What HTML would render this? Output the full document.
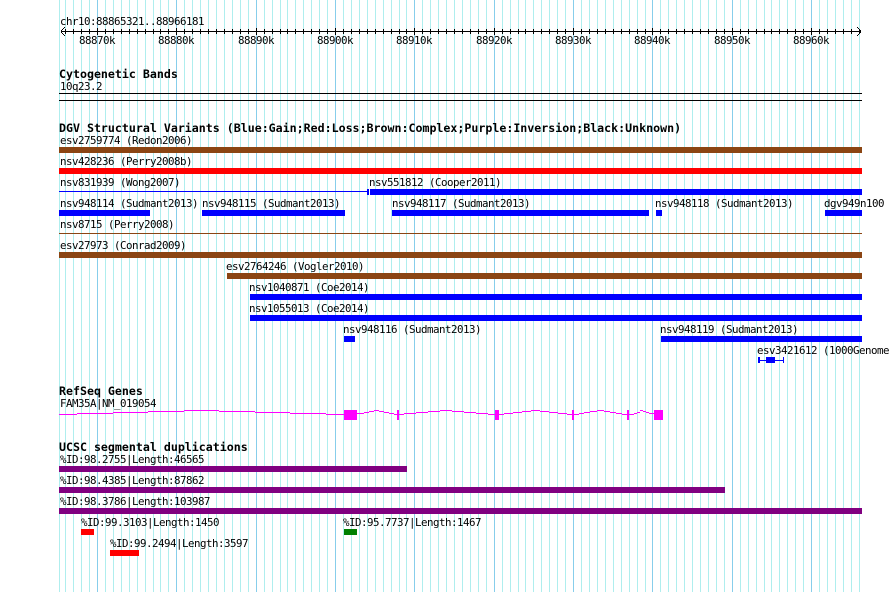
<!DOCTYPE html>
<html>
<head>
<meta charset="utf-8">
<style>
html,body{margin:0;padding:0;background:#fff;width:890px;height:592px;overflow:hidden}
svg{display:block}
text{font-family:"DejaVu Sans Mono","Liberation Mono",monospace;font-size:10.8px;letter-spacing:-0.503px;fill:#000}
text.b{font-size:11.62px;font-weight:bold;letter-spacing:0}
</style>
</head>
<body>
<svg width="890" height="592" viewBox="0 0 890 592" xmlns="http://www.w3.org/2000/svg">
<defs>
<path id="mi" d="M59.5 0V592M65.5 0V592M73.5 0V592M81.5 0V592M89.5 0V592M105.5 0V592M113.5 0V592M121.5 0V592M129.5 0V592M137.5 0V592M145.5 0V592M153.5 0V592M160.5 0V592M168.5 0V592M184.5 0V592M192.5 0V592M200.5 0V592M208.5 0V592M216.5 0V592M224.5 0V592M232.5 0V592M240.5 0V592M248.5 0V592M264.5 0V592M272.5 0V592M280.5 0V592M287.5 0V592M295.5 0V592M303.5 0V592M311.5 0V592M319.5 0V592M327.5 0V592M343.5 0V592M351.5 0V592M359.5 0V592M367.5 0V592M375.5 0V592M383.5 0V592M391.5 0V592M399.5 0V592M406.5 0V592M422.5 0V592M430.5 0V592M438.5 0V592M446.5 0V592M454.5 0V592M462.5 0V592M470.5 0V592M478.5 0V592M486.5 0V592M502.5 0V592M510.5 0V592M518.5 0V592M525.5 0V592M533.5 0V592M541.5 0V592M549.5 0V592M557.5 0V592M565.5 0V592M581.5 0V592M589.5 0V592M597.5 0V592M605.5 0V592M613.5 0V592M621.5 0V592M629.5 0V592M637.5 0V592M645.5 0V592M660.5 0V592M668.5 0V592M676.5 0V592M684.5 0V592M692.5 0V592M700.5 0V592M708.5 0V592M716.5 0V592M724.5 0V592M740.5 0V592M748.5 0V592M756.5 0V592M764.5 0V592M771.5 0V592M779.5 0V592M787.5 0V592M795.5 0V592M803.5 0V592M819.5 0V592M827.5 0V592M835.5 0V592M843.5 0V592M851.5 0V592M859.5 0V592"/>
<path id="ma" d="M97.5 0V592M176.5 0V592M256.5 0V592M335.5 0V592M414.5 0V592M494.5 0V592M573.5 0V592M652.5 0V592M732.5 0V592M811.5 0V592"/>
<clipPath id="c1"><rect x="61" y="29" width="800" height="5"/></clipPath>
<clipPath id="c2"><rect x="61" y="28" width="800" height="7"/></clipPath>
</defs>

<g shape-rendering="crispEdges" fill="none">
<use href="#mi" stroke="#afeeee"/>
<use href="#ma" stroke="#87ceeb"/>

<!-- ruler -->
<path d="M61 31.5H861" stroke="#000"/>
<g clip-path="url(#c1)"><use href="#mi" stroke="#000"/></g>
<g clip-path="url(#c2)"><use href="#ma" stroke="#000"/></g>
<path d="M61 30h1v3h-1zM62 29h1v1h-1zM62 33h1v1h-1zM63 28h1v1h-1zM63 34h1v1h-1zM64 27h1v1h-1zM64 35h1v1h-1z" fill="#000"/>
<path d="M860 30h1v3h-1zM859 29h1v1h-1zM859 33h1v1h-1zM858 28h1v1h-1zM858 34h1v1h-1zM857 27h1v1h-1zM857 35h1v1h-1z" fill="#000"/>

<!-- band lines -->
<path d="M59 93.5H862M59 100.5H862" stroke="#000"/>
</g>

<g shape-rendering="crispEdges">
<!-- DGV -->
<rect x="59" y="147" width="803" height="6" fill="#8b4513"/>
<rect x="59" y="168" width="803" height="6" fill="#f00"/>
<rect x="59" y="191" width="309" height="1" fill="#00f"/>
<rect x="367" y="189" width="2" height="6" fill="#00f"/>
<rect x="370" y="189" width="492" height="6" fill="#00f"/>
<rect x="59" y="210" width="91" height="6" fill="#00f"/>
<rect x="202" y="210" width="143" height="6" fill="#00f"/>
<rect x="392" y="210" width="257" height="6" fill="#00f"/>
<rect x="656" y="210" width="6" height="6" fill="#00f"/>
<rect x="825" y="210" width="37" height="6" fill="#00f"/>
<rect x="59" y="233" width="803" height="1" fill="#8b4513"/>
<rect x="59" y="252" width="803" height="6" fill="#8b4513"/>
<rect x="227" y="273" width="635" height="6" fill="#8b4513"/>
<rect x="250" y="294" width="612" height="6" fill="#00f"/>
<rect x="250" y="315" width="612" height="6" fill="#00f"/>
<rect x="344" y="336" width="11" height="6" fill="#00f"/>
<rect x="661" y="336" width="201" height="6" fill="#00f"/>
<rect x="758" y="357" width="2" height="6" fill="#00f"/>
<rect x="760" y="360" width="23" height="1" fill="#00f"/>
<rect x="766" y="357" width="9" height="6" fill="#00f"/>
<rect x="783" y="357" width="1" height="6" fill="#00f"/>

<!-- gene -->
<path fill="none" stroke="#f0f" d="M59 414.5H77M77 413.5H113M113 412.5H148M148 411.5H184M184 410.5H219M219 411.5H255M255 412.5H290M290 413.5H326M326 414.5H344M357 413.5H364M364 412.5H369M369 411.5H374M374 410.5H379M379 411.5H384M384 412.5H389M389 413.5H394M394 414.5H397M399 414.5H404M404 413.5H416M416 412.5H428M428 411.5H440M440 410.5H452M452 411.5H464M464 412.5H476M476 413.5H488M488 414.5H495M499 414.5H504M504 413.5H513M513 412.5H522M522 411.5H531M531 410.5H540M540 411.5H549M549 412.5H558M558 413.5H567M567 414.5H572M574 414.5H579M579 413.5H584M584 412.5H590M590 411.5H597M597 410.5H604M604 411.5H610M610 412.5H616M616 413.5H622M622 414.5H627M629 414.5H634M634 413.5H637M637 412.5H640M640 410.5H643M643 411.5H646M646 412.5H649M649 413.5H654"/>
<g fill="#f0f">
<rect x="344" y="410" width="13" height="10"/>
<rect x="397" y="410" width="2" height="10"/>
<rect x="495" y="410" width="4" height="10"/>
<rect x="572" y="410" width="2" height="10"/>
<rect x="627" y="410" width="2" height="10"/>
<rect x="654" y="410" width="9" height="10"/>
</g>

<!-- segdups -->
<rect x="59" y="466" width="348" height="6" fill="#800080"/>
<rect x="59" y="487" width="666" height="6" fill="#800080"/>
<rect x="59" y="508" width="803" height="6" fill="#800080"/>
<rect x="81" y="529" width="13" height="6" fill="#f00"/>
<rect x="344" y="529" width="13" height="6" fill="#008000"/>
<rect x="110" y="550" width="29" height="6" fill="#f00"/>
</g>

<text x="60" y="25">chr10:88865321..88966181</text>
<text x="79" y="44">88870k</text>
<text x="158" y="44">88880k</text>
<text x="238" y="44">88890k</text>
<text x="317" y="44">88900k</text>
<text x="396" y="44">88910k</text>
<text x="476" y="44">88920k</text>
<text x="555" y="44">88930k</text>
<text x="634" y="44">88940k</text>
<text x="714" y="44">88950k</text>
<text x="793" y="44">88960k</text>

<text class="b" x="59" y="78">Cytogenetic Bands</text>
<text x="60" y="90">10q23.2</text>

<text class="b" x="59" y="132">DGV Structural Variants (Blue:Gain;Red:Loss;Brown:Complex;Purple:Inversion;Black:Unknown)</text>
<text x="60" y="144">esv2759774 (Redon2006)</text>
<text x="60" y="165">nsv428236 (Perry2008b)</text>
<text x="60" y="186">nsv831939 (Wong2007)</text>
<text x="369" y="186">nsv551812 (Cooper2011)</text>
<text x="60" y="207">nsv948114 (Sudmant2013)</text>
<text x="202" y="207">nsv948115 (Sudmant2013)</text>
<text x="392" y="207">nsv948117 (Sudmant2013)</text>
<text x="655" y="207">nsv948118 (Sudmant2013)</text>
<text x="824" y="207">dgv949n100</text>
<text x="60" y="228">nsv8715 (Perry2008)</text>
<text x="60" y="249">esv27973 (Conrad2009)</text>
<text x="226" y="270">esv2764246 (Vogler2010)</text>
<text x="249" y="291">nsv1040871 (Coe2014)</text>
<text x="249" y="312">nsv1055013 (Coe2014)</text>
<text x="343" y="333">nsv948116 (Sudmant2013)</text>
<text x="660" y="333">nsv948119 (Sudmant2013)</text>
<text x="757" y="354">esv3421612 (1000Genome</text>

<text class="b" x="59" y="395">RefSeq Genes</text>
<text x="60" y="407">FAM35A|NM_019054</text>

<text class="b" x="59" y="451">UCSC segmental duplications</text>
<text x="60" y="463">%ID:98.2755|Length:46565</text>
<text x="60" y="484">%ID:98.4385|Length:87862</text>
<text x="60" y="505">%ID:98.3786|Length:103987</text>
<text x="81" y="526">%ID:99.3103|Length:1450</text>
<text x="343" y="526">%ID:95.7737|Length:1467</text>
<text x="110" y="547">%ID:99.2494|Length:3597</text>
</svg>
</body>
</html>
